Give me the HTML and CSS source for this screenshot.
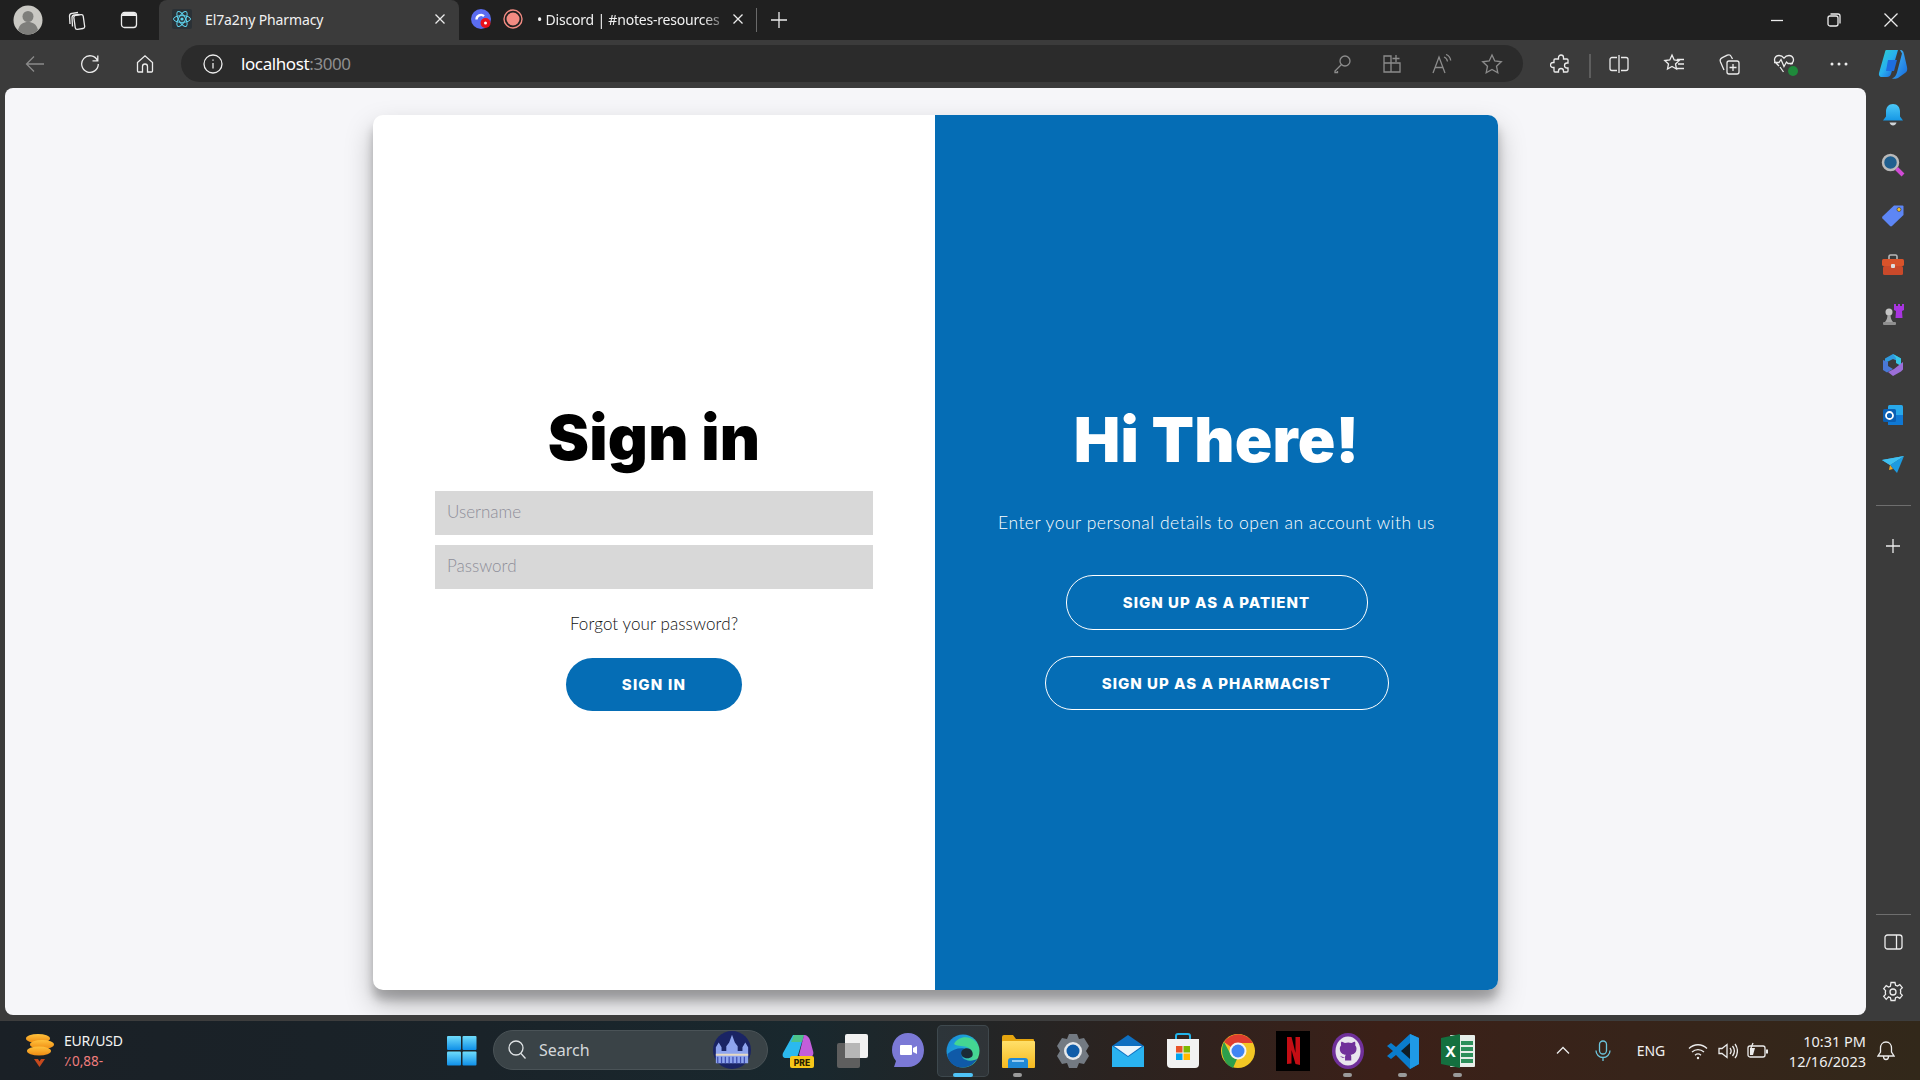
FILE: index.html
```html
<!DOCTYPE html>
<html lang="en">
<head>
<meta charset="utf-8">
<title>El7a2ny Pharmacy</title>
<link rel="stylesheet" href="styles.css">
</head>
<body>
<svg class="defs" width="0" height="0" aria-hidden="true">
  <defs>
    <linearGradient id="gCop" x1="0" y1="0" x2="1" y2="1"><stop offset="0" stop-color="#2fd3c5"/><stop offset=".5" stop-color="#27b0f0"/><stop offset="1" stop-color="#1d4fd8"/></linearGradient>
    <linearGradient id="gCop2" x1="0" y1="0" x2="1" y2="1"><stop offset="0" stop-color="#4cc3f5"/><stop offset="1" stop-color="#1469dd"/></linearGradient>
    <linearGradient id="gPre" x1="0" y1="0" x2="1" y2="1"><stop offset="0" stop-color="#39c6e8"/><stop offset=".45" stop-color="#9dd24f"/><stop offset="1" stop-color="#c65bd8"/></linearGradient>
    <linearGradient id="gWin" x1="0" y1="0" x2="0" y2="1"><stop offset="0" stop-color="#6fdcfb"/><stop offset="1" stop-color="#0f8fe8"/></linearGradient>
    <linearGradient id="gBell" x1="0" y1="0" x2="0" y2="1"><stop offset="0" stop-color="#4cc8f7"/><stop offset="1" stop-color="#1597e5"/></linearGradient>
    <linearGradient id="gEdge" x1="0" y1="0" x2="1" y2=".6"><stop offset="0" stop-color="#1a83d8"/><stop offset=".55" stop-color="#1ea7d8"/><stop offset="1" stop-color="#4fdc8a"/></linearGradient>
    <linearGradient id="gFold" x1="0" y1="0" x2="0" y2="1"><stop offset="0" stop-color="#ffe06a"/><stop offset="1" stop-color="#f6b91f"/></linearGradient>
    <linearGradient id="gCoin" x1="0" y1="0" x2="0" y2="1"><stop offset="0" stop-color="#ffc23c"/><stop offset="1" stop-color="#ee8a12"/></linearGradient>
  </defs>
</svg>

<div class="browser">
  <header class="tabstrip">
    <div class="cell c-49">
      <svg width="30" height="30" viewBox="0 0 30 30"><circle cx="15" cy="15" r="14.5" fill="#c9c8c3"/><circle cx="15" cy="11.5" r="5.5" fill="#7e7e7b"/><path d="M5 25c1.5-6 5.500-8 10-8s8.500 2 10 8c-2.500 2.800-6 4.500-10 4.500S7.500 27.800 5 25z" fill="#7e7e7b"/></svg>
    </div>
    <div class="cell c-50">
      <svg class="ic" width="20" height="20" viewBox="0 0 20 20"><rect x="7.500" y="5" width="9.500" height="14" rx="2" transform="rotate(-8 12 12)"/><path d="M3 14 2.500 6c0-1.500 1-2.500 2.500-2.700L11 2.500M5.500 16.500 5 7.500C5 6 6 5.200 7.500 5l5-.5"/></svg>
    </div>
    <div class="cell c-53">
      <svg class="ic" width="20" height="20" viewBox="0 0 20 20"><rect x="2.500" y="2.500" width="15" height="15" rx="3"/><path class="solid" d="M3 6V5a2 2 0 0 1 2-2h10a2 2 0 0 1 2 2v1z"/></svg>
    </div>
    <div class="tab tab-active">
      <span class="favicon">
        <svg width="20" height="20" viewBox="0 0 20 20"><rect width="20" height="20" rx="2" fill="#2b3136"/><g fill="none" stroke="#5fd3ee" stroke-width="1"><ellipse cx="10" cy="10" rx="8.500" ry="3.400"/><ellipse cx="10" cy="10" rx="8.500" ry="3.400" transform="rotate(60 10 10)"/><ellipse cx="10" cy="10" rx="8.500" ry="3.400" transform="rotate(120 10 10)"/></g><circle cx="10" cy="10" r="1.600" fill="#5fd3ee"/></svg>
      </span>
      <span class="tab-title">El7a2ny Pharmacy</span>
      <svg class="ic tab-close" width="12" height="12" viewBox="0 0 12 12"><path d="M1.500 1.500l9 9M10.500 1.500l-9 9"/></svg>
    </div>
    <div class="tab tab-idle">
      <span class="favicon">
        <svg width="20" height="20" viewBox="0 0 20 20"><circle cx="10" cy="10" r="10" fill="#5a6cf0"/><path d="M5.500 10.500a4.500 4.500 0 0 1 7.500-3.400" fill="none" stroke="#fff" stroke-width="2.400"/><circle cx="14.500" cy="14" r="5" fill="#e8111a"/><circle cx="14.500" cy="14" r="1.500" fill="#fff"/></svg>
      </span>
      <span class="favicon rec">
        <svg width="20" height="20" viewBox="0 0 20 20"><circle cx="10" cy="10" r="9" fill="none" stroke="#f28b82" stroke-width="1.400"/><circle cx="10" cy="10" r="6.500" fill="#f28b82"/></svg>
      </span>
      <span class="tab-title tab-fade">• Discord | #notes-resources</span>
      <svg class="ic tab-close" width="12" height="12" viewBox="0 0 12 12"><path d="M1.500 1.500l9 9M10.500 1.500l-9 9"/></svg>
    </div>
    <span class="tab-sep"></span>
    <div class="cell c-42">
      <svg class="ic" width="18" height="18" viewBox="0 0 18 18"><path d="M9 1v16M1 9h16"/></svg>
    </div>
    <div class="winctl">
      <div class="cell c-57"><svg class="ic" width="14" height="14" viewBox="0 0 14 14"><path d="M1 7.500h12"/></svg></div>
      <div class="cell c-57"><svg class="ic" width="14" height="14" viewBox="0 0 14 14"><rect x="1" y="3" width="10" height="10" rx="2"/><path d="M3.500 1H11a2 2 0 0 1 2 2v7.500"/></svg></div>
      <div class="cell c-58"><svg class="ic" width="14" height="14" viewBox="0 0 14 14"><path d="M.5.500l13 13M13.500.500l-13 13"/></svg></div>
    </div>
  </header>

  <nav class="toolbar">
    <div class="cell c-55 dim">
      <svg class="ic" width="20" height="20" viewBox="0 0 20 20"><path d="M19 10H1.500M9 2.500 1.500 10 9 17.500"/></svg>
    </div>
    <div class="cell c-55">
      <svg class="ic" width="20" height="20" viewBox="0 0 20 20"><path d="M17.500 6.500A8.300 8.300 0 1 0 18.300 10M17.800 1.500v5.300h-5.300"/></svg>
    </div>
    <div class="cell c-55">
      <svg class="ic" width="20" height="20" viewBox="0 0 20 20"><path d="M2.500 8.500 10 1.800l7.500 6.700V17a1 1 0 0 1-1 1H12.500v-5.500a2.500 2.500 0 0 0-5 0V18H3.500a1 1 0 0 1-1-1z"/></svg>
    </div>
    <div class="address">
      <span class="info-ic">
        <svg class="ic" width="20" height="20" viewBox="0 0 20 20"><circle cx="10" cy="10" r="9"/><path d="M10 9v5.500M10 5.500v1.300"/></svg>
      </span>
      <span class="url">localhost<span class="url-port">:3000</span></span>
      <div class="address-tools">
        <div class="cell c-50 dim2"><svg class="ic" width="20" height="20" viewBox="0 0 20 20"><circle cx="13" cy="7" r="5"/><path d="M9.500 10.500 3 17v1.500h2.500V17M14.300 5.800h.01"/></svg></div>
        <div class="cell c-50 dim2"><svg class="ic" width="20" height="20" viewBox="0 0 20 20"><path d="M2 2h7v7H2zM2 9h7v9H2zM9 9h9v9H9zM14 1v7M10.500 4.500h7"/></svg></div>
        <div class="cell c-50 dim2"><svg class="ic" width="20" height="20" viewBox="0 0 20 20"><path d="M1 19 7 3l6 16M3 13.500h8M12 3c2 .8 3.200 2.500 3.500 4.500M14 0.500c2.600 1 4.300 3.300 4.700 6"/></svg></div>
        <div class="cell c-50 dim2"><svg class="ic" width="22" height="22" viewBox="0 0 22 22"><path d="M11 2l2.800 6 6.500.8-4.800 4.400 1.300 6.500L11 16.400l-5.800 3.300 1.300-6.500L1.700 8.800 8.200 8z"/></svg></div>
      </div>
    </div>
    <div class="cell c-55 ext">
      <svg class="ic" width="22" height="22" viewBox="0 0 22 22"><path d="M8.500 4.500a2.500 2.500 0 0 1 5 0V6H17a1 1 0 0 1 1 1v3h-1a2.500 2.500 0 0 0 0 5h1v3a1 1 0 0 1-1 1h-3.500v-1a2.500 2.500 0 0 0-5 0v1H5a1 1 0 0 1-1-1v-3.500H3a2.500 2.500 0 0 1 0-5h1V7a1 1 0 0 1 1-1h3.500z"/></svg>
    </div>
    <span class="tool-sep"></span>
    <div class="cell c-55"><svg class="ic" width="20" height="20" viewBox="0 0 20 20"><path d="M10 1v18M8 3.500H3a2 2 0 0 0-2 2v9a2 2 0 0 0 2 2h5M12 3.500h5a2 2 0 0 1 2 2v9a2 2 0 0 1-2 2h-5"/></svg></div>
    <div class="cell c-55"><svg class="ic" width="22" height="22" viewBox="0 0 22 22"><path d="M9 2l2.200 5 5 .5-3.700 3.500 1 5L9 13.500 4.500 16l1-5L1.800 7.500l5-.5zM14 6.500h7M15 11h6M13 15.500h8"/></svg></div>
    <div class="cell c-55"><svg class="ic" width="22" height="22" viewBox="0 0 22 22"><rect x="9" y="8" width="12" height="13" rx="2"/><path d="M15 11v7M11.500 14.500h7M6 17 2.500 9c-.8-2 .1-3.600 1.800-4.400l5-2.400c1.700-.8 3.200-.2 4 1.500L14.500 6"/></svg></div>
    <div class="cell c-55 health">
      <svg class="ic" width="22" height="22" viewBox="0 0 22 22"><path d="M6 13 2.500 9.500C.500 7 1.800 2.500 6 2.500c2 0 3.800 1 5 2.700 1.200-1.700 3-2.700 5-2.700 4.200 0 5.500 4.500 3.500 7l-2 2M1 9.500h5l2-3 3 7 2.500-4.500 1.500 1.500h5M7 14l3.500 5"/></svg>
      <span class="health-dot"></span>
    </div>
    <div class="cell c-55"><svg class="solidic" width="20" height="6" viewBox="0 0 20 6"><circle cx="3" cy="3" r="1.500"/><circle cx="10" cy="3" r="1.500"/><circle cx="17" cy="3" r="1.500"/></svg></div>
    <div class="cell c-54">
      <svg width="30" height="30" viewBox="0 0 30 30"><path d="M8 1h12l-7 24c-.5 2-2 3-4 3H3.500C1.500 28 .500 26 1 24L7 3c.2-1 .5-2 1-2z" fill="url(#gCop)"/><path d="M22 1c3 0 3.500 2 4 4l3 13c.6 3 0 5-2 6l-7 5c-1 .7-4 1-6 .5 3-1 4-3 5-6l5-19z" fill="url(#gCop2)"/><path d="M10 11h9l-3 11H8z" fill="#1d6ee0"/></svg>
    </div>
  </nav>

  <div class="workspace">
    <main class="viewport">
      <section class="card">
        <div class="panel panel-left">
          <h1 class="title title-dark">Sign in</h1>
          <input class="field" type="text" placeholder="Username">
          <input class="field" type="password" placeholder="Password">
          <a class="forgot" href="#">Forgot your password?</a>
          <button class="btn btn-solid" type="button">Sign in</button>
        </div>
        <div class="panel panel-right">
          <h1 class="title title-light">Hi There!</h1>
          <p class="lead">Enter your personal details to open an account with us</p>
          <button class="btn btn-ghost btn-patient" type="button">Sign up as a patient</button>
          <button class="btn btn-ghost btn-pharm" type="button">Sign up as a pharmacist</button>
        </div>
      </section>
    </main>

    <aside class="sidebar">
      <div class="side-item s1"><svg width="22" height="24" viewBox="0 0 22 24"><path d="M11 1c4.500 0 7 3.500 7 7.500v5l3 4H1l3-4v-5C4 4.500 6.500 1 11 1z" fill="url(#gBell)"/><path d="M7.500 19.500h7c-.5 2-2 3-3.500 3s-3-1-3.500-3z" fill="#cfd4d8"/></svg></div>
      <div class="side-item"><svg width="24" height="24" viewBox="0 0 24 24"><circle cx="9.500" cy="9.500" r="7.500" fill="#1f5f8f" stroke="#b9b9b9" stroke-width="2.500"/><path d="M15.500 15.500l6.500 6.500" stroke="#d14bd6" stroke-width="4"/></svg></div>
      <div class="side-item"><svg width="24" height="24" viewBox="0 0 24 24"><path d="M1.500 13.500 13 2.500h8.500a1 1 0 0 1 1 1V12L11 23a1.500 1.500 0 0 1-2 0l-7.500-7.500a1.500 1.500 0 0 1 0-2z" fill="#5d86f5"/><circle cx="18" cy="6.500" r="2" fill="#f2c230" stroke="#333" stroke-width=".6"/></svg></div>
      <div class="side-item"><svg width="24" height="22" viewBox="0 0 24 22"><path d="M8 5V2.500A1.500 1.500 0 0 1 9.500 1h5A1.500 1.500 0 0 1 16 2.500V5" fill="none" stroke="#b8b8b8" stroke-width="1.600"/><rect x="1" y="5" width="22" height="7" rx="1.500" fill="#d9532a"/><rect x="2" y="12" width="20" height="9" rx="1.500" fill="#c9492a"/><rect x="10" y="10" width="4" height="4" rx="1" fill="#ddd"/></svg></div>
      <div class="side-item"><svg width="24" height="24" viewBox="0 0 24 24"><circle cx="8" cy="9" r="3.500" fill="#c5c5c5"/><path d="M6.500 12h3c0 3 1 5 2.500 7H4c1.500-2 2.500-4 2.500-7z" fill="#a8a8a8"/><rect x="2" y="19" width="13" height="3" rx="1" fill="#8f8f8f"/><path d="M14 1h2v2h2V1h2v2h2V1h2v6l-2 1 .5 7H15.500l.5-7-2-1z" fill="#a835e0" transform="translate(-1 0)"/></svg></div>
      <div class="side-item"><svg width="22" height="24" viewBox="0 0 22 24"><path d="M3 5.500 11 1l8 4.500v4L11 6 3 10z" fill="#2f9be0"/><path d="M11 1l8 4.500V13l-5-3V5z" fill="#37c6e4"/><path d="M1 7v10l4 2.500 6-3.500-5-3V9z" fill="#4a78d8"/><path d="M6 19l5 4 8-4.500 2-2V9l-9 7z" fill="#9c6fd8"/></svg></div>
      <div class="side-item"><svg width="22" height="22" viewBox="0 0 22 22"><rect x="6" y="1" width="15" height="20" rx="1.500" fill="#28a8ea"/><path d="M6 11h15v9a1 1 0 0 1-1 1H7a1 1 0 0 1-1-1z" fill="#0f78d4"/><rect x="1" y="5" width="13" height="13" rx="1.500" fill="#0a5fb3"/><circle cx="7.500" cy="11.500" r="3.500" fill="none" stroke="#fff" stroke-width="1.800"/></svg></div>
      <div class="side-item"><svg width="24" height="20" viewBox="0 0 24 20"><path d="M1 5 23 1 9 10z" fill="#36b5ee"/><path d="M23 1 9 10l7 8z" fill="#1d9be0"/><path d="M9 10l-1 5 4-1z" fill="#f0a820"/><path d="M1 5l8 5 14-9z" fill="#3fc0f0"/></svg></div>
      <span class="side-line"></span>
      <div class="side-item side-plus"><svg class="ic" width="16" height="16" viewBox="0 0 16 16"><path d="M8 1v14M1 8h14"/></svg></div>
      <div class="side-bottom">
        <span class="side-line"></span>
        <div class="side-item side-panel"><svg class="ic" width="19" height="16" viewBox="0 0 19 16"><rect x="1" y="1" width="17" height="14" rx="2.500"/><path d="M12.500 1v14"/></svg></div>
        <div class="side-item side-gear"><svg class="ic" width="22" height="22" viewBox="0 0 22 22"><circle cx="11" cy="11" r="3"/><path d="M9 1.500h4l.6 2.800 1.800.8 2.400-1.500 2.500 3-1.900 2 .3 2-.3 1.800 1.900 2-2.500 3-2.400-1.500-1.800.8-.6 2.800H9l-.6-2.800-1.800-.8L4.200 18.400l-2.500-3 1.900-2-.3-1.800.3-2-1.900-2 2.500-3 2.400 1.500 1.800-.8z"/></svg></div>
      </div>
    </aside>
  </div>

  <footer class="taskbar">
    <div class="widget">
      <svg class="coins" width="30" height="36" viewBox="0 0 30 36"><ellipse cx="13" cy="5.500" rx="12" ry="4.500" fill="url(#gCoin)"/><ellipse cx="17" cy="11.500" rx="12" ry="4.500" fill="url(#gCoin)"/><ellipse cx="14" cy="18" rx="12" ry="4.500" fill="url(#gCoin)"/><path d="M9 26h4l1.500 2.500L16 26h4l-5.500 8z" fill="#c6491d"/></svg>
      <div class="widget-text">
        <span class="pair">EUR/USD</span>
        <span class="change">٪0,88-</span>
      </div>
    </div>
    <div class="cell c-55 win">
      <svg width="30" height="30" viewBox="0 0 30 30"><rect width="14" height="14" rx="1" fill="url(#gWin)"/><rect x="15.500" width="14" height="14" rx="1" fill="url(#gWin)"/><rect y="15.500" width="14" height="14" rx="1" fill="url(#gWin)"/><rect x="15.500" y="15.500" width="14" height="14" rx="1" fill="url(#gWin)"/></svg>
    </div>
    <div class="search">
      <svg class="ic" width="20" height="22" viewBox="0 0 20 22"><circle cx="9" cy="9" r="7"/><path d="M14 14.500l4.500 5"/></svg>
      <span class="search-label">Search</span>
      <span class="search-art">
        <svg width="52" height="38" viewBox="0 0 52 40"><circle cx="26" cy="20" r="20" fill="#1a2464"/><path d="M9 34V17l3-5 3 5v4h5v-5l3-4 3-8 3 8 3 4v5h5v-4l3-5 3 5v17z" fill="#8ea4ee"/><path d="M9 24h34v2H9z" fill="#e6d9c2"/><path d="M11 27v7M15 27v7M19 27v7M23 27v7M27 27v7M31 27v7M35 27v7M39 27v7" stroke="#3e4db0" stroke-width="1.300"/></svg>
      </span>
    </div>
    <div class="apps">
      <div class="app"><svg width="34" height="36" viewBox="0 0 34 36"><path d="M12 2h11l-6 20c-.5 2-2 3-4 3H5c-3 0-4-2-3-5z" fill="#2bb9ee"/><path d="M13 2h10l-2 7H10z" fill="#4cc38a"/><path d="M23 2c3 0 5 2 6 5l3 11c1 3 0 6-4 6h-8l-2-2z" fill="#c35edb"/><rect x="9" y="23" width="24" height="12" rx="2" fill="#f7c719"/><text class="pre" x="21" y="32.500" text-anchor="middle">PRE</text></svg></div>
      <div class="app"><svg width="34" height="36" viewBox="0 0 34 36"><rect x="1" y="10" width="23" height="25" rx="2" fill="#5e5e5e"/><rect x="9" y="1" width="23" height="24" rx="2" fill="#f1f1f1"/><rect x="9" y="10" width="15" height="15" fill="#b6b6b6"/></svg></div>
      <div class="app"><svg width="34" height="38" viewBox="0 0 34 38"><path d="M17 1c9 0 16 7 16 17s-7 17-16 17H3l2-6C2 25 1 22 1 18 1 8 8 1 17 1z" fill="#7b79d6"/><path d="M10 13h10a1 1 0 0 1 1 1v8a1 1 0 0 1-1 1H10a1 1 0 0 1-1-1v-8a1 1 0 0 1 1-1zM22 16l4-2v8l-4-2z" fill="#fff"/></svg></div>
      <div class="app app-active">
        <svg width="34" height="38" viewBox="0 0 34 38"><circle cx="17" cy="19" r="16.500" fill="url(#gEdge)"/><path d="M8 12c3-6 10-8 16-6 5 2 9 7 9 13-2 5-5 7-9 6 3-2 3-7-1-9-5-3-11-1-15-4z" fill="#44d692"/><path d="M1.500 22c0 7 6 13.500 15 13.500 7 0 12-4 15-9-4 3-12 3-15-1-2-3-1-7 2-9-6-1-12 1-17 5.500z" fill="#0f5aa8"/><path d="M17 17.500c-2.500 2-2.500 5.500 0 7.500 3 2 7 1.500 9-.5 1.500-2 .5-6-2-7.500-2-1-5-1-7 .5z" fill="#1b2b36"/></svg>
        <span class="app-run"></span>
      </div>
      <div class="app app-open"><svg width="34" height="36" viewBox="0 0 34 36"><path d="M1 4a2 2 0 0 1 2-2h9l3 4h17a1 1 0 0 1 1 1v4H1z" fill="#e5a50f"/><rect x="1" y="8" width="33" height="27" rx="1" fill="url(#gFold)"/><path d="M7 35v-7a3 3 0 0 1 3-3h14a3 3 0 0 1 3 3v7z" fill="#1f88d6"/><path d="M11 28h12" stroke="#bde2fb" stroke-width="1.500"/></svg><span class="app-dot"></span></div>
      <div class="app"><svg width="34" height="36" viewBox="0 0 34 36"><path d="M13 1h8l2 5 5-1 5 8-3 5 3 5-5 8-5-1-2 5h-8l-2-5-5 1-5-8 3-5-3-5 5-8 5 1z" fill="#737a82"/><circle cx="17" cy="18" r="9" fill="#e6e8ea"/><circle cx="17" cy="18" r="6.500" fill="#0f5ca8"/></svg></div>
      <div class="app"><svg width="34" height="34" viewBox="0 0 34 34"><path d="M1 12 17 1l16 11v21H1z" fill="#0e6fc0"/><path d="M1 12l16 11 16-11v21H1z" fill="#2ab3f0"/><path d="M3 12h28L17 22z" fill="#e9f4fb"/></svg></div>
      <div class="app"><svg width="34" height="38" viewBox="0 0 34 38"><path d="M10 8V4a2 2 0 0 1 2-2h10a2 2 0 0 1 2 2v4" fill="none" stroke="#22b4ea" stroke-width="2"/><path d="M1 7h32v25a4 4 0 0 1-4 4H5a4 4 0 0 1-4-4z" fill="#f2f2f2"/><rect x="10" y="14" width="6.500" height="6.500" fill="#e8532a"/><rect x="17.500" y="14" width="6.500" height="6.500" fill="#7fb900"/><rect x="10" y="21.500" width="6.500" height="6.500" fill="#00a3ee"/><rect x="17.500" y="21.500" width="6.500" height="6.500" fill="#ffb900"/></svg></div>
      <div class="app"><svg width="34" height="36" viewBox="0 0 34 36"><circle cx="17" cy="18" r="17" fill="#f2c624"/><path d="M3 9A17 17 0 0 1 32 10H17a8 8 0 0 0-7 4z" fill="#df3d2f"/><path d="M3 9l7 13a8 8 0 0 0 6 4l-4 9C3 32-2 19 3 9z" fill="#2d9f4c"/><circle cx="17" cy="18" r="8.500" fill="#f4f4f4"/><circle cx="17" cy="18" r="6.500" fill="#3f85f3"/></svg></div>
      <div class="app"><svg width="34" height="40" viewBox="0 0 34 40"><rect width="34" height="40" fill="#000"/><path d="M11 6h4.500l4 16V6H24v28l-4.500-1-4-14v13.500L11 33z" fill="#c40d14"/></svg></div>
      <div class="app app-open"><svg width="32" height="36" viewBox="0 0 32 36"><ellipse cx="16" cy="18" rx="16" ry="18" fill="#70309a"/><ellipse cx="16" cy="18" rx="12.500" ry="14.500" fill="#e9e6ee"/><g transform="translate(3.500 4.500) scale(1.050)"><path d="M9 19c-3 1-3.500-1-5-1.500M15 22v-3.500c0-1-.3-1.700-.8-2 2.800-.3 5.800-1.400 5.800-6 0-1.300-.5-2.400-1.300-3.200.1-.3.500-1.600-.1-3.300 0 0-1-.3-3.400 1.300a11.600 11.600 0 0 0-6.200 0C6.600 3.700 5.500 4 5.500 4c-.6 1.700-.2 3-.1 3.300C4.600 8.100 4.100 9.200 4.100 10.500c0 4.600 3 5.700 5.800 6-.4.300-.7.800-.8 1.500V22z" fill="#70309a"/></g></svg><span class="app-dot"></span></div>
      <div class="app app-open"><svg width="32" height="36" viewBox="0 0 32 36"><path d="M23 1 32 5v26l-9 5L9 22l-5 4-4-3 6-5-6-5 4-3 5 4z" fill="#0a7ccc"/><path d="M23 1 32 5v26l-9 5z" fill="#1f9ae6"/><path d="M23 10v16l-9-8z" fill="#101d26"/></svg><span class="app-dot"></span></div>
      <div class="app app-open"><svg width="34" height="36" viewBox="0 0 34 36"><rect x="9" y="2" width="25" height="32" rx="1" fill="#e7eee9"/><path d="M20 8h12v4H20zM20 14h12v4H20zM20 20h12v4H20zM20 26h12v4H20z" fill="#2c8f5a"/><path d="M0 5l19-4v34L0 31z" fill="#14703f"/><text class="xls" x="9.500" y="24" text-anchor="middle">X</text></svg><span class="app-dot"></span></div>
    </div>
    <div class="tray">
      <div class="cell c-40"><svg class="ic" width="14" height="9" viewBox="0 0 14 9"><path d="M1 7.500l6-6 6 6"/></svg></div>
      <div class="cell c-40 mic"><svg class="ic" width="16" height="22" viewBox="0 0 16 22"><rect x="4.500" y="1" width="7" height="13" rx="3.500"/><path d="M1 10.500a7 7 0 0 0 14 0M8 17.500V21"/></svg></div>
      <span class="eng">ENG</span>
      <div class="cell c-30"><svg class="ic" width="20" height="18" viewBox="0 0 20 18"><path d="M1 6.500c5-5 13-5 18 0M4 10c3.500-3.300 8.500-3.300 12 0M7 13.200c1.800-1.500 4.200-1.500 6 0"/><circle class="solid" cx="10" cy="16" r="1.200"/></svg></div>
      <div class="cell c-30"><svg class="ic" width="20" height="18" viewBox="0 0 20 18"><path d="M1 6.500h3l5-4v13l-5-4H1zM12 6c1.300 1.700 1.300 4.300 0 6M14.500 4c2.300 3 2.300 7 0 10M17 2c3.200 4 3.200 10 0 14"/></svg></div>
      <div class="cell c-30"><svg class="ic" width="22" height="18" viewBox="0 0 22 18"><rect x="1" y="4" width="17" height="11" rx="2"/><path class="solid" d="M3 13V6h5l-2 7zM19 7.500h2v4h-2z"/><path d="M6 1 4 6"/></svg></div>
      <div class="clock"><span>10:31 PM</span><span>12/16/2023</span></div>
      <div class="cell c-bell"><svg class="ic" width="18" height="20" viewBox="0 0 18 20"><path d="M9 1c3.500 0 5.500 2.800 5.500 6v4l2.500 4H1l2.500-4V7C3.500 3.800 5.500 1 9 1zM6.500 15.500c0 2 1 3 2.500 3s2.500-1 2.500-3"/></svg></div>
    </div>
  </footer>
</div>
</body>
</html>
```

FILE: styles.css
```css
* { box-sizing: border-box; }
html, body { margin: 0; padding: 0; height: 100%; }
body { font-family: "Noto Sans", "Open Sans", sans-serif; background: #3b3b3b; color: #fff; overflow: hidden; }
.defs { display: block; height: 0; }

.browser { display: flex; flex-direction: column; width: 1920px; height: 1080px; }

.cell { display: flex; align-items: center; justify-content: center; flex: none; height: 100%; position: relative; }
.c-30 { width: 30px; }
.c-40 { width: 40px; }
.c-42 { width: 44px; }
.c-49 { width: 49px; }
.c-50 { width: 50px; }
.c-53 { width: 53px; }
.c-54 { width: 54px; }
.c-55 { width: 55px; }
.c-57 { width: 57px; }
.c-58 { width: 58px; }
.ic { fill: none; stroke: currentColor; stroke-width: 1.300; color: #ececec; display: block; }
.ic .solid { fill: currentColor; stroke: none; }
.solidic { fill: #ececec; display: block; }
.dim .ic { color: #8a8a8a; }
.dim2 .ic { color: #8c8c8c; }

/* tab strip */
.tabstrip { display: flex; flex: none; align-items: stretch; height: 40px; background: #202020; padding-left: 3px; }
.tab { display: flex; align-items: center; flex: none; font-size: 14px; padding-bottom: 1px; }
.tab-active { width: 300px; margin-left: 4px; padding: 0 13px 2px 13px; background: #3b3b3b; border-radius: 8px 8px 0 0; }
.tab-idle { width: 293px; padding: 0 8px 2px 12px; }
.favicon { display: flex; flex: none; }
.rec { margin-left: 12px; }
.tab-title { flex: 1; margin-left: 13px; white-space: nowrap; overflow: hidden; color: #f1f1f1; letter-spacing: -.12px; }
.tab-fade { margin-left: 14px; letter-spacing: -.2px; mask-image: linear-gradient(90deg, #000 85%, transparent); -webkit-mask-image: linear-gradient(90deg, #000 85%, transparent); }
.tab-close { flex: none; }
.tab-sep { flex: none; width: 1px; height: 24px; margin: 8px 0 0 4px; background: #6a6a6a; }
.winctl { display: flex; margin-left: auto; }

/* toolbar */
.toolbar { display: flex; flex: none; align-items: stretch; height: 48px; background: #3b3b3b; padding: 0 0 0 7px; }
.address { display: flex; align-items: center; flex: none; width: 1342px; height: 37px; margin: 5px 10px 0 9px; padding: 0 6px 0 22px; background: #2b2b2b; border-radius: 19px; }
.info-ic { display: flex; flex: none; }
.url { margin-left: 18px; font-size: 17px; letter-spacing: -.4px; color: #fff; }
.url-port { color: #8f8f8f; }
.address-tools { display: flex; height: 100%; margin-left: auto; }
.tool-sep { flex: none; width: 2px; height: 24px; margin: 14px 0 0 1px; background: #5e5e5e; }
.health-dot { position: absolute; left: 32px; top: 26px; width: 10px; height: 10px; border-radius: 50%; background: #1f8a3b; }

/* main */
.workspace { display: flex; flex: 1; min-height: 0; }
.viewport { flex: 1; min-width: 0; margin: 0 0 5px 5px; padding-top: 27px; display: flex; justify-content: center; align-items: flex-start; background: #f6f6f9; border-radius: 8px; overflow: hidden; }
.card { display: flex; flex: none; width: 1125px; height: 875px; background: #fff; border-radius: 10px; overflow: hidden; box-shadow: 0 14px 28px rgba(0,0,0,.25), 0 10px 10px rgba(0,0,0,.22); }
.panel { display: flex; flex-direction: column; align-items: center; flex: none; }
.panel-left { width: 562px; padding: 285px 62px 0 62px; color: #111; }
.panel-right { width: 563px; background: #056db5; padding-top: 287px; color: #fff; }
.title { margin: 0; font-family: "Inter", sans-serif; font-weight: 900; font-size: 62px; line-height: 76px; letter-spacing: .2px; white-space: nowrap; }
.title-dark { color: #000; }
.title-light { color: #fff; }
.field { display: block; width: 438px; height: 44px; margin: 0 0 10px; padding: 0 12px 4px; border: 0; border-radius: 0; background: #d8d8d8; font-family: "Lato", sans-serif; font-size: 17px; font-weight: 300; outline: none; }
.field:first-of-type { margin-top: 15px; }
.field::placeholder { color: #8e8e98; opacity: 1; }
.forgot { margin-top: 12px; font-family: "Lato", sans-serif; font-size: 17px; font-weight: 300; line-height: 26px; color: #111; text-decoration: none; letter-spacing: .1px; }
.btn { display: block; flex: none; font-family: "Inter", sans-serif; font-weight: 800; font-size: 15px; letter-spacing: 1px; text-transform: uppercase; border-radius: 27px; cursor: pointer; }
.btn-solid { width: 176px; height: 53px; margin-top: 21px; letter-spacing: 1.2px; background: #056db5; border: 0; color: #fff; }
.btn-ghost { background: transparent; border: 1px solid #fff; color: #fff; }
.lead { margin: 32px 0 0; font-family: "Lato", sans-serif; font-size: 17.500px; font-weight: 300; line-height: 26px; letter-spacing: .5px; white-space: nowrap; }
.btn-patient { width: 302px; height: 55px; margin-top: 39px; }
.btn-pharm { width: 344px; height: 54px; margin-top: 26px; }

/* sidebar */
.sidebar { display: flex; flex-direction: column; align-items: center; flex: none; width: 54px; padding-top: 2px; }
.side-item { display: flex; align-items: center; justify-content: center; flex: none; width: 100%; height: 50px; }
.side-line { flex: none; display: block; width: 35px; height: 1px; margin-top: 15px; background: #6e6e6e; }
.side-plus { height: 40px; margin-top: 20px; }
.side-bottom { display: flex; flex-direction: column; align-items: center; width: 100%; margin-top: auto; padding-bottom: 3px; }
.side-bottom .side-line { margin-top: 0; }
.side-panel { height: 50px; margin-top: 2px; }
.side-gear { height: 50px; }

/* taskbar */
.taskbar { display: flex; flex: none; align-items: stretch; height: 60px; border-top: 1px solid #3d3d3d; background: linear-gradient(90deg, #1a2026 0%, #1a2329 25%, #19282e 42%, #2b2320 58%, #3b2018 72%, #37241a 85%, #32281a 100%); }
.widget { display: flex; align-items: center; flex: none; width: 434px; padding-left: 25px; }
.coins { flex: none; }
.widget-text { display: flex; flex-direction: column; margin-left: 9px; font-size: 14px; line-height: 20px; letter-spacing: -.2px; }
.pair { color: #f4f4f4; }
.change { color: #ef7d7d; font-size: 13.500px; }
.search { display: flex; align-items: center; flex: none; width: 275px; height: 40px; margin: 9px 2px 0 4px; padding: 0 9px 0 13px; background: #3a4347; border: 1px solid #4a5357; border-radius: 20px; }
.search .ic { color: #dfe3e5; }
.search-label { margin-left: 12px; font-size: 16px; color: #d4d8da; }
.search-art { display: flex; margin-left: auto; }
.apps { display: flex; flex: none; }
.app { position: relative; display: flex; align-items: center; justify-content: center; flex: none; width: 55px; height: 100%; }
.app-active::before { content: ""; position: absolute; left: 2px; top: 4px; width: 50px; height: 50px; border-radius: 5px; background: rgba(90,110,125,.22); border: 1px solid rgba(110,130,140,.25); }
.app-active svg { position: relative; }
.app-run { position: absolute; left: 18px; bottom: 3px; width: 20px; height: 4px; border-radius: 2px; background: #4fc3f7; }
.app-dot { position: absolute; left: 23px; bottom: 3px; width: 9px; height: 4px; border-radius: 2px; background: #9a9a9a; }
.pre { font-family: "Inter", sans-serif; font-weight: 800; font-size: 8.500px; fill: #2a2000; }
.xls { font-family: "Inter", sans-serif; font-weight: 700; font-size: 15px; fill: #fff; }
.tray { display: flex; align-items: stretch; margin-left: auto; flex: none; padding-right: 15px; }
.mic .ic { color: #6cc5dd; }
.eng { align-self: center; flex: none; width: 48px; margin: 0 8px 0 4px; text-align: center; font-size: 14px; color: #f0f0f0; }
.clock { display: flex; flex-direction: column; justify-content: center; align-items: flex-end; flex: none; width: 93px; font-size: 14.500px; line-height: 20px; color: #f0f0f0; }
.c-bell { width: 39px; }
```
